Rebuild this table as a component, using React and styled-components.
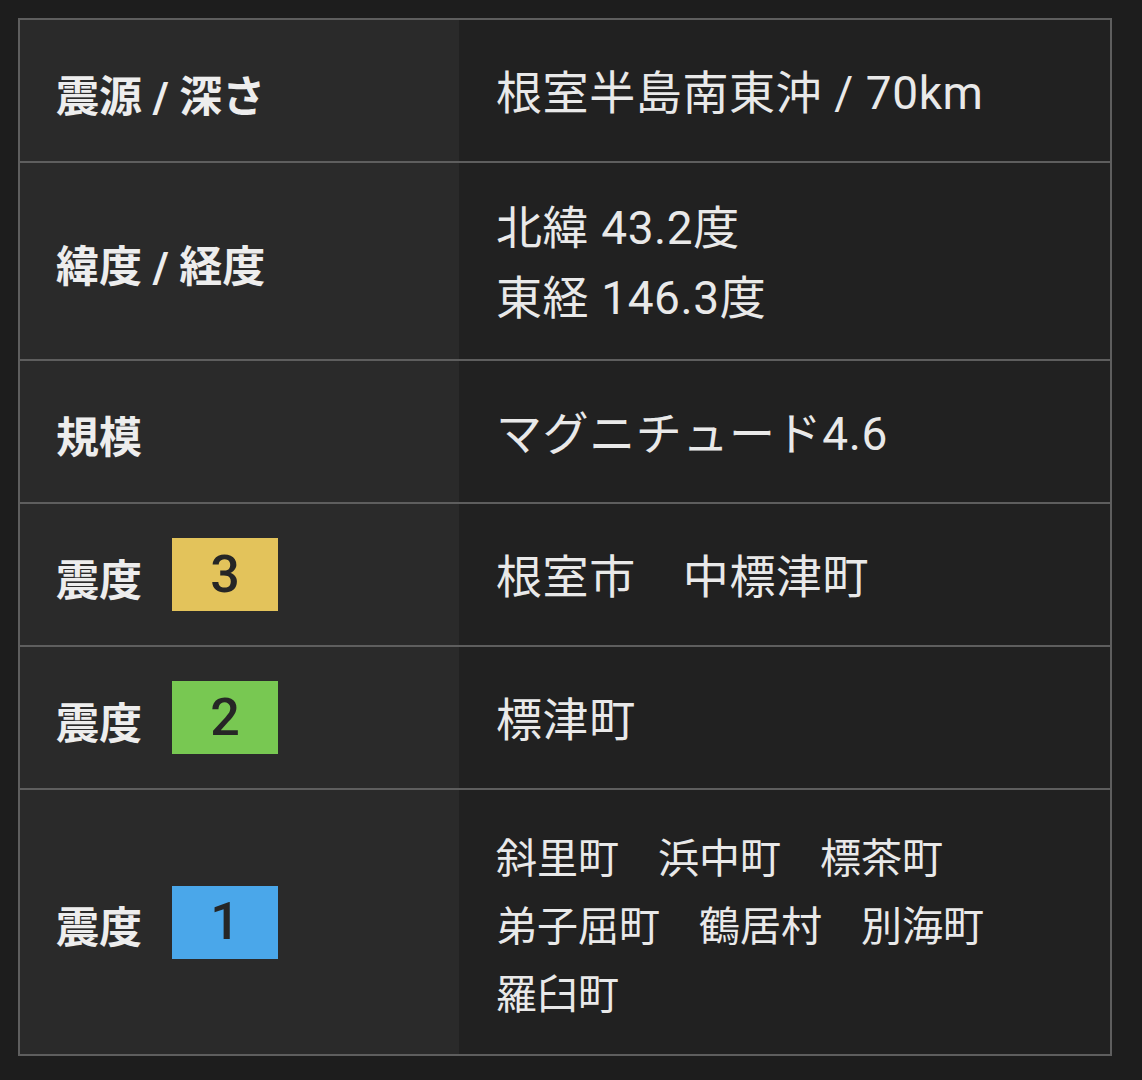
import React from 'react';
import styled, { createGlobalStyle } from 'styled-components';

const GlobalStyle = createGlobalStyle`
  html, body {
    margin: 0;
    background: #1d1d1d;
  }
  body {
    padding: 18px;
    font-family: Roboto, "Noto Sans CJK JP", sans-serif;
    color: #ececec;
  }
`;

const Table = styled.div`
  width: 1094px;
  box-sizing: border-box;
  border: 2px solid #5e5e5e;
  display: flex;
  flex-flow: column;
`;

const Row = styled.div`
  display: grid;
  grid-template-columns: 439px 1fr;
  min-height: 141px;
  & + & {
    border-top: 2px solid #5e5e5e;
  }
`;

const Label = styled.div`
  background: #2a2a2a;
  display: flex;
  align-items: center;
  gap: 30px;
  padding: 4px 36px 0;
  font-size: 43px;
  font-weight: 700;
  color: #ededed;
`;

const Value = styled.div`
  background: #212121;
  display: flex;
  flex-flow: column;
  justify-content: center;
  padding: ${({ $small }) => ($small ? '35px 37px 25px' : '30px 37px 26px')};
  font-size: ${({ $small }) => ($small ? '41px' : '46px')};
  letter-spacing: ${({ $small }) => ($small ? '0' : '0.6px')};
  line-height: ${({ $small }) => ($small ? '68px' : '70px')};
  color: #e9e9e9;
`;

const Places = styled.div`
  display: flex;
  flex-flow: row wrap;
  column-gap: ${({ $gap }) => $gap}px;
`;

const Badge = styled.span`
  display: inline-flex;
  align-items: center;
  justify-content: center;
  width: 106px;
  height: 73px;
  margin-top: -4px;
  background: ${({ $color }) => $color};
  color: #262626;
  font-size: 52px;
  font-weight: 500;
  line-height: 1;
`;

const intensityColors = {
  3: '#e3c35b',
  2: '#78c852',
  1: '#4aa7ea',
};

const shindo = [
  { level: 3, places: ['根室市', '中標津町'], gap: 47, small: false },
  { level: 2, places: ['標津町'], gap: 47, small: false },
  {
    level: 1,
    places: ['斜里町', '浜中町', '標茶町', '弟子屈町', '鶴居村', '別海町', '羅臼町'],
    gap: 39,
    small: true,
  },
];

const App = () => (
  <>
    <GlobalStyle />
    <Table>
      <Row>
        <Label>震源 / 深さ</Label>
        <Value>根室半島南東沖 / 70km</Value>
      </Row>
      <Row>
        <Label>緯度 / 経度</Label>
        <Value>
          <div>北緯 43.2度</div>
          <div>東経 146.3度</div>
        </Value>
      </Row>
      <Row>
        <Label>規模</Label>
        <Value>マグニチュード4.6</Value>
      </Row>
      {shindo.map(({ level, places, gap, small }) => (
        <Row key={level}>
          <Label>
            震度
            <Badge $color={intensityColors[level]}>{level}</Badge>
          </Label>
          <Value $small={small}>
            <Places $gap={gap}>
              {places.map((p) => (
                <span key={p}>{p}</span>
              ))}
            </Places>
          </Value>
        </Row>
      ))}
    </Table>
  </>
);

export default App;
